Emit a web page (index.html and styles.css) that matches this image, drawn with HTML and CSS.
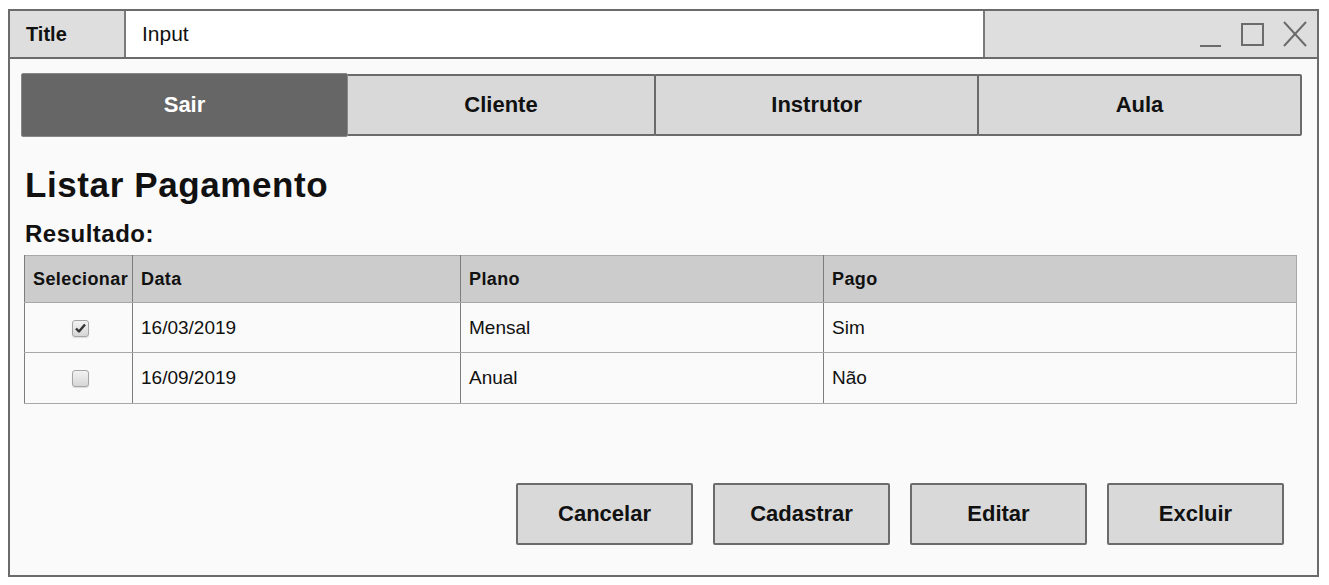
FILE: index.html
```html
<!DOCTYPE html>
<html lang="pt">
<head>
<meta charset="utf-8">
<title>Listar Pagamento</title>
<link rel="stylesheet" href="styles.css">
</head>
<body>
<div class="window">
  <div class="titlebar">
    <div class="tb-title">Title</div>
    <div class="tb-input">Input</div>
    <div class="tb-controls">
      <svg class="ctrl-icons" width="110" height="30" viewBox="0 0 110 30">
        <line x1="2" y1="27" x2="23" y2="27" stroke="#6b6b6b" stroke-width="2"/>
        <rect x="44" y="5" width="21" height="21" fill="none" stroke="#6b6b6b" stroke-width="2"/>
        <line x1="86" y1="3" x2="108" y2="27" stroke="#6b6b6b" stroke-width="2"/>
        <line x1="108" y1="3" x2="86" y2="27" stroke="#6b6b6b" stroke-width="2"/>
      </svg>
    </div>
  </div>
  <div class="content">
    <nav class="tabs">
      <div class="tab tab-active">Sair</div>
      <div class="tab">Cliente</div>
      <div class="tab">Instrutor</div>
      <div class="tab">Aula</div>
    </nav>
    <h1 class="page-title">Listar Pagamento</h1>
    <h2 class="section-title">Resultado:</h2>
    <table class="grid">
      <thead>
        <tr>
          <th class="col-sel">Selecionar</th>
          <th class="col-data">Data</th>
          <th class="col-plano">Plano</th>
          <th>Pago</th>
        </tr>
      </thead>
      <tbody>
        <tr class="row1">
          <td class="cell-check"><span class="check checked"><svg width="11" height="10" viewBox="0 0 11 10"><path d="M1 5.5 L4 8.5 L10 1.5" fill="none" stroke="#333" stroke-width="2.4" stroke-linejoin="round"/></svg></span></td>
          <td>16/03/2019</td>
          <td>Mensal</td>
          <td>Sim</td>
        </tr>
        <tr class="row2">
          <td class="cell-check"><span class="check"></span></td>
          <td>16/09/2019</td>
          <td>Anual</td>
          <td>Não</td>
        </tr>
      </tbody>
    </table>
    <div class="actions">
      <button class="btn">Cancelar</button>
      <button class="btn">Cadastrar</button>
      <button class="btn">Editar</button>
      <button class="btn">Excluir</button>
    </div>
  </div>
</div>
</body>
</html>
```

FILE: styles.css
```css
html, body {
  margin: 0;
  padding: 0;
  background: #ffffff;
}
body {
  padding: 9px 0 0 8px;
  font-family: "Liberation Sans", Arial, sans-serif;
  color: #111;
}
.window {
  width: 1307px;
  height: 564px;
  border: 2px solid #6b6b6b;
  display: flex;
  flex-direction: column;
  background: #fafafa;
}
.titlebar {
  height: 46px;
  border-bottom: 2px solid #6b6b6b;
  display: flex;
  background: #dedede;
  flex: none;
}
.tb-title {
  width: 98px;
  padding-left: 16px;
  border-right: 2px solid #7a7a7a;
  font-weight: bold;
  font-size: 20px;
  line-height: 46px;
}
.tb-input {
  width: 841px;
  padding-left: 16px;
  background: #ffffff;
  border-right: 2px solid #7a7a7a;
  font-size: 21px;
  line-height: 46px;
}
.tb-controls {
  flex: 1;
  display: flex;
  justify-content: flex-end;
  align-items: center;
  padding-right: 9px;
}
.content {
  flex: 1;
  padding: 14px 15px 0 11px;
}
.tabs {
  display: grid;
  grid-template-columns: 327px 308px 323px 1fr;
  height: 64px;
  align-items: center;
}
.tab {
  height: 58px;
  margin-left: -2px;
  border: 2px solid #6b6b6b;
  border-radius: 2px;
  background: #d9d9d9;
  display: flex;
  align-items: center;
  justify-content: center;
  font-weight: bold;
  font-size: 22px;
}
.tab-active {
  margin-left: 0;
  height: 62px;
  border: 1px solid #888;
  background: #666666;
  color: #ffffff;
  position: relative;
  z-index: 1;
}
.page-title {
  margin: 28px 0 0 4px;
  font-size: 35px;
  line-height: 40px;
  font-weight: bold;
  letter-spacing: 0.6px;
}
.section-title {
  margin: 15px 0 0 4px;
  font-size: 24px;
  line-height: 27px;
  font-weight: bold;
  letter-spacing: 0.5px;
}
.grid {
  margin: 8px 0 0 3px;
  width: 1273px;
  border-collapse: collapse;
  table-layout: fixed;
  border: 1px solid #a8a8a8;
}
.grid th, .grid td {
  text-align: left;
  padding: 0 0 0 8px;
  border-left: 1px solid #7d7d7d;
  border-bottom: 1px solid #a8a8a8;
  white-space: nowrap;
  overflow: hidden;
}
.grid th {
  height: 46px;
  background: #cccccc;
  font-weight: bold;
  font-size: 18px;
  letter-spacing: 0.4px;
}
.grid td {
  height: 49px;
  font-size: 19px;
  background: #fafafa;
}
.grid .row2 td {
  height: 50px;
}
.col-sel { width: 99px; }
.col-data { width: 319px; }
.col-plano { width: 354px; }
.grid .cell-check {
  padding: 0;
  text-align: center;
}
.check {
  display: inline-flex;
  align-items: center;
  justify-content: center;
  width: 15px;
  height: 15px;
  border: 1px solid #a5a5a5;
  border-radius: 3px;
  background: linear-gradient(#f2f2f2, #d6d6d6);
  vertical-align: middle;
  box-shadow: 0 1px 1px rgba(0,0,0,0.12);
  margin-left: 3px;
}
.actions {
  display: flex;
  justify-content: flex-end;
  gap: 20px;
  margin: 79px 18px 0 0;
}
.btn {
  width: 177px;
  height: 62px;
  border: 2px solid #6b6b6b;
  border-radius: 2px;
  background: #d9d9d9;
  font-family: "Liberation Sans", Arial, sans-serif;
  font-weight: bold;
  font-size: 22px;
  color: #111;
  padding: 0;
}
```
